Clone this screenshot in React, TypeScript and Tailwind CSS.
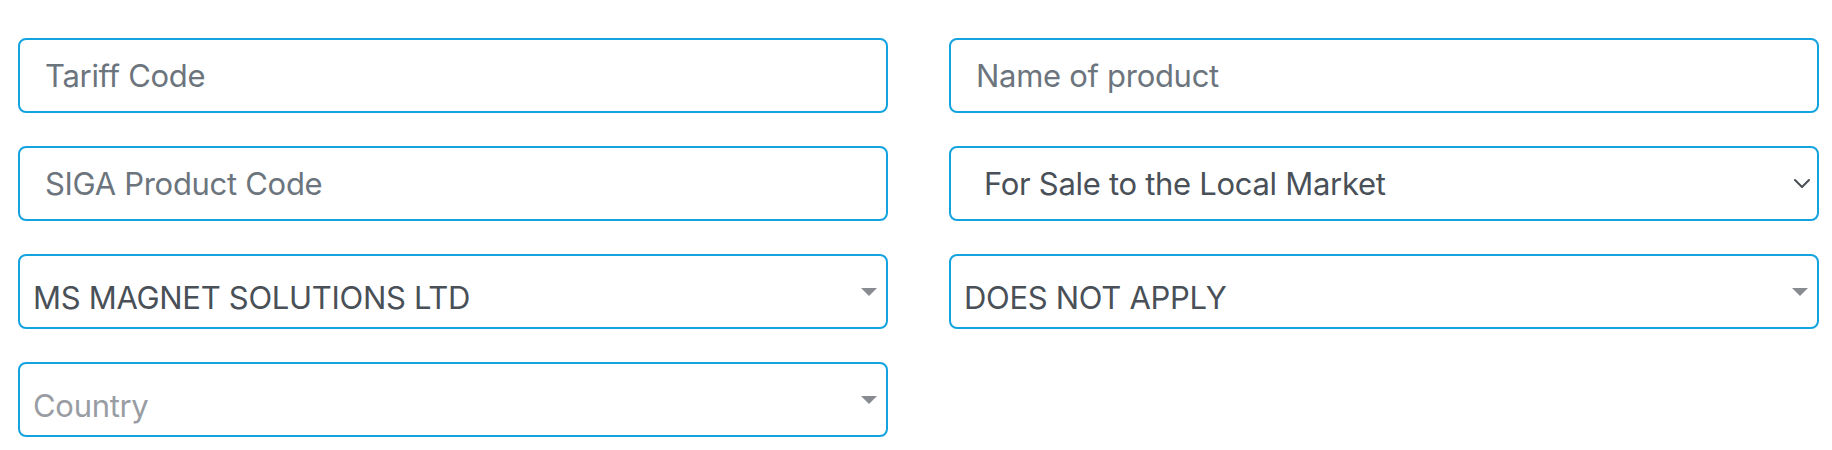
import React from "react";

const font = { fontFamily: "Inter, 'Noto Sans', sans-serif" };

function TextField({ placeholder }: { placeholder: string }) {
  return (
    <div className="h-[75px] w-[870px] rounded-[8px] border-2 border-[#13a3de] bg-white flex items-center px-[25px]">
      <span className="text-[31px] tracking-[-0.3px] leading-none text-[#6c757d]">{placeholder}</span>
    </div>
  );
}

function NativeSelect({ value }: { value: string }) {
  return (
    <div className="h-[75px] w-[870px] rounded-[8px] border-2 border-[#13a3de] bg-white flex items-center pl-[33px] pr-[6px]">
      <span className="flex-1 text-[31px] tracking-[-0.3px] leading-none text-[#495057]">{value}</span>
      <svg width="18" height="11" viewBox="0 0 18 11" fill="none" stroke="#4a4f55" strokeWidth="2" strokeLinecap="round" strokeLinejoin="round">
        <path d="M2 2l7 7 7-7" />
      </svg>
    </div>
  );
}

function Select2({ value, placeholder }: { value?: string; placeholder?: string }) {
  return (
    <div className="h-[75px] w-[870px] rounded-[8px] border-2 border-[#13a3de] bg-white flex items-center pl-[13px] pr-[9px] pt-[11px]">
      <span className={`flex-1 text-[31px] tracking-[-0.3px] leading-none ${value ? "text-[#495057]" : "text-[#999da3]"}`}>
        {value || placeholder}
      </span>
      <svg width="16" height="8" viewBox="0 0 16 8" className="-mt-[11px]">
        <polygon points="0,0 16,0 8,8" fill="#888c91" />
      </svg>
    </div>
  );
}

export default function App() {
  return (
    <div className="w-[1832px] h-[450px] bg-white pt-[38px] pl-[18px]" style={font}>
      <div className="grid grid-cols-[870px_870px] gap-x-[61px] gap-y-[33px]">
        <TextField placeholder="Tariff Code" />
        <TextField placeholder="Name of product" />
        <TextField placeholder="SIGA Product Code" />
        <NativeSelect value="For Sale to the Local Market" />
        <Select2 value="MS MAGNET SOLUTIONS LTD" />
        <Select2 value="DOES NOT APPLY" />
        <Select2 placeholder="Country" />
      </div>
    </div>
  );
}
